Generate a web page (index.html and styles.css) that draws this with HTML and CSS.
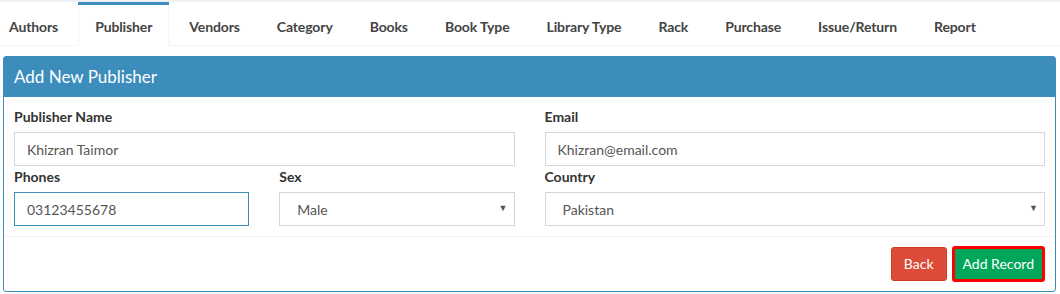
FILE: index.html
```html
<!DOCTYPE html>
<html lang="en">
<head>
    <meta charset="UTF-8">
    <meta name="viewport" content="width=device-width, initial-scale=1.0">
    <title>Add New Publisher</title>
    <link rel="stylesheet" href="styles.css">
</head>
<body>
    <div class="top-strip"></div>

    <ul class="tabs">
        <li><a href="#">Authors</a></li>
        <li class="active"><a href="#">Publisher</a></li>
        <li><a href="#">Vendors</a></li>
        <li><a href="#">Category</a></li>
        <li><a href="#">Books</a></li>
        <li><a href="#">Book Type</a></li>
        <li><a href="#">Library Type</a></li>
        <li><a href="#">Rack</a></li>
        <li><a href="#">Purchase</a></li>
        <li><a href="#">Issue/Return</a></li>
        <li><a href="#">Report</a></li>
    </ul>

    <div class="box">
        <div class="box-header">
            <h3 class="box-title">Add New Publisher</h3>
        </div>

        <form class="box-body">
            <div class="form-group span-2">
                <label for="pub-name">Publisher Name</label>
                <input id="pub-name" class="form-control" type="text" value="Khizran Taimor">
            </div>
            <div class="form-group span-2">
                <label for="email">Email</label>
                <input id="email" class="form-control" type="text" value="Khizran@email.com">
            </div>
            <div class="form-group">
                <label for="phones">Phones</label>
                <input id="phones" class="form-control focused" type="text" value="03123455678">
            </div>
            <div class="form-group">
                <label for="sex">Sex</label>
                <div class="select-wrap">
                    <select id="sex" class="form-control">
                        <option>Male</option>
                        <option>Female</option>
                    </select>
                </div>
            </div>
            <div class="form-group span-2">
                <label for="country">Country</label>
                <div class="select-wrap">
                    <select id="country" class="form-control">
                        <option>Pakistan</option>
                    </select>
                </div>
            </div>
        </form>

        <div class="box-footer">
            <button class="btn btn-danger" type="button">Back</button>
            <button class="btn btn-success marked" type="button">Add Record</button>
        </div>
    </div>
</body>
</html>
```

FILE: styles.css
```css
* {
    margin: 0;
    padding: 0;
    box-sizing: border-box;
}

body {
    font-family: "Lato", "Liberation Sans", sans-serif;
    font-size: 14px;
    line-height: 20px;
    color: #333;
    background: #fff;
}

.top-strip {
    height: 2px;
    background: #ecf0f5;
}

/* tabs */
.tabs {
    list-style: none;
    display: flex;
    padding-left: 9px;
    border-bottom: 1px solid #f4f4f4;
}

.tabs li {
    border-top: 3px solid transparent;
    margin-bottom: -1px;
    margin-right: 37px;
}

.tabs li a {
    display: block;
    padding: 12px 0 8px;
    font-weight: 700;
    letter-spacing: -0.12px;
    color: #444;
    text-decoration: none;
    border-bottom: 1px solid transparent;
}

.tabs li.active {
    border-top-color: #3c8dbc;
    margin-left: -17px;
    margin-right: 20px;
}

.tabs li.active a {
    padding: 12px 16px 8px;
    background: #fff;
    border-left: 1px solid #f4f4f4;
    border-right: 1px solid #f4f4f4;
    border-bottom-color: #fff;
}

/* box */
.box {
    margin: 10px 4px 0 3px;
    border: 1px solid #3c8dbc;
    border-radius: 3px;
    background: #fff;
}

.box-header {
    background: #3c8dbc;
    padding: 10px;
}

.box-title {
    font-size: 17px;
    font-weight: 400;
    line-height: 20px;
    color: #fff;
}

.box-body {
    display: grid;
    grid-template-columns: repeat(4, 1fr);
    column-gap: 30px;
    row-gap: 1px;
    padding: 10px 10px 10px;
}

.span-2 {
    grid-column: span 2;
}

.form-group label {
    display: block;
    font-weight: 700;
    margin-bottom: 5px;
}

.form-control {
    display: block;
    width: 100%;
    height: 34px;
    padding: 6px 12px;
    font-family: inherit;
    font-size: 14px;
    color: #555;
    background: #fff;
    border: 1px solid #d2d6de;
    border-radius: 0;
    outline: none;
}

.form-control.focused {
    border-color: #3c8dbc;
}

.select-wrap {
    position: relative;
}

.select-wrap select {
    appearance: none;
    -webkit-appearance: none;
    padding-left: 17px;
}

.select-wrap::after {
    content: "\25BC";
    position: absolute;
    right: 7px;
    top: 10px;
    font-size: 9px;
    line-height: 12px;
    color: #555;
    pointer-events: none;
}

/* footer */
.box-footer {
    display: flex;
    justify-content: flex-end;
    align-items: center;
    gap: 5px;
    padding: 10px;
    border-top: 1px solid #f4f4f4;
}

.btn {
    height: 34px;
    padding: 6px 12px;
    font-family: inherit;
    font-size: 14px;
    line-height: 20px;
    color: #fff;
    border: 1px solid transparent;
    border-radius: 3px;
    cursor: pointer;
}

.btn-danger {
    background: #dd4b39;
    border-color: #d73925;
}

.btn-success {
    background: #00a65a;
    border-color: #008d4c;
}

.btn.marked {
    height: 36px;
    margin: -1px 0;
    padding: 5px 8px;
    border: 3px solid #f00;
}
```
